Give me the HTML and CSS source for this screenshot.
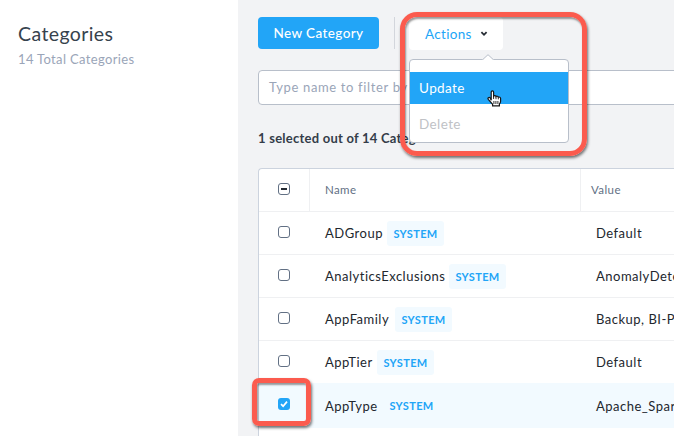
FILE: index.html
```
<!DOCTYPE html>
<html lang="en">
<head>
<meta charset="utf-8">
<title>Categories</title>
<link rel="stylesheet" href="styles.css">
</head>
<body>
<div class="app">
  <aside class="sidebar">
    <h1>Categories</h1>
    <p>14 Total Categories</p>
  </aside>
  <main class="content">
    <div class="toolbar">
      <button class="primary">New Category</button>
      <span class="separator"></span>
      <div class="actions">
        <button class="actions-button">Actions
          <svg width="8" height="6" viewBox="0 0 8 6"><path d="M1.4 1.2 4 3.8 6.6 1.2" fill="none" stroke="#252b33" stroke-width="1.8"/></svg>
        </button>
        <div class="menu">
          <svg class="menu-arrow" width="12" height="6" viewBox="0 0 12 6"><path d="M0 6 1 5.5 6 .7 11 5.5 12 6Z" fill="#fff"/><path d="M.8 5.5 6 .7 11.2 5.5" fill="none" stroke="#b8bfca"/></svg>
          <div class="item active">Update</div>
          <div class="item disabled">Delete</div>
        </div>
      </div>
    </div>
    <div class="filter">Type name to filter by</div>
    <div class="summary">1 selected out of 14 Categories</div>
    <div class="table">
      <div class="row header">
        <div class="check"><span class="box mixed"></span></div>
        <div class="name">Name</div>
        <div class="value">Value</div>
      </div>
      <div class="row">
        <div class="check"><span class="box"></span></div>
        <div class="name"><span class="n1">ADGroup</span><span class="tag">SYSTEM</span></div>
        <div class="value">Default</div>
      </div>
      <div class="row">
        <div class="check"><span class="box"></span></div>
        <div class="name"><span class="n2">AnalyticsExclusions</span><span class="tag">SYSTEM</span></div>
        <div class="value">AnomalyDetection</div>
      </div>
      <div class="row">
        <div class="check"><span class="box"></span></div>
        <div class="name"><span class="n3">AppFamily</span><span class="tag">SYSTEM</span></div>
        <div class="value">Backup, BI-Platform</div>
      </div>
      <div class="row last">
        <div class="check"><span class="box"></span></div>
        <div class="name"><span class="n4">AppTier</span><span class="tag">SYSTEM</span></div>
        <div class="value">Default</div>
      </div>
      <div class="row selected">
        <div class="check"><span class="box checked"><svg width="12" height="12" viewBox="0 0 12 12"><path d="M3 6.2 5.1 8.2 9 3.6" fill="none" stroke="#fff" stroke-width="1.7"/></svg></span></div>
        <div class="name"><span class="n5">AppType</span><span class="tag">SYSTEM</span></div>
        <div class="value">Apache_Spark</div>
      </div>
    </div>
  </main>
  <div class="callout callout-menu"></div>
  <div class="callout callout-check"></div>
  <svg class="cursor" width="15" height="17" viewBox="0 0 15 17"><path d="M4.2 10.2V2.3C4.2.5 6.6.5 6.6 2.3V6.2C7.2 5.4 8.8 5.5 9 6.6 9.8 5.9 11.1 6.2 11.3 7.2 12.3 6.7 13.6 7.2 13.6 8.5V11.2C13.6 12.8 12.7 13.4 12.4 14.2V15.8H5.6V14.3L1.3 9.4C.3 8 2 6.7 3.2 7.9Z" fill="#fff" stroke="#161616" stroke-width="1.2"/><path d="M6.6 6V9M9 7V9.2M11.3 7.5V9.4M6.9 11V14M8.9 11V14M10.9 11V14" stroke="#161616" stroke-width=".9"/></svg>
</div>
</body>
</html>
```
FILE: styles.css
```
* { box-sizing: border-box; }
body {
  margin: 0;
  overflow: hidden;
  font-family: Lato, "Liberation Sans", sans-serif;
  font-size: 13px;
  letter-spacing: .4px;
  color: #22272e;
}
button { border: 0; font: inherit; letter-spacing: inherit; }
svg { display: block; }
.app { position: relative; display: flex; width: 674px; height: 436px; overflow: hidden; background: #fff; }
.sidebar { flex: 0 0 238px; padding: 21px 18px; }
.sidebar h1 { margin: 0; font-size: 19.5px; font-weight: 400; line-height: 25px; letter-spacing: .4px; color: #36424d; }
.sidebar p { margin: 4px 0 0; font-size: 13px; line-height: 18px; letter-spacing: .35px; color: #9aa5b8; }
.content { flex: 1; min-width: 0; padding: 17px 0 0 20px; background: #f2f3f5; }
.toolbar { display: flex; height: 33px; }
.primary { width: 121px; height: 32px; padding: 0; border-radius: 4px; background: #22a5f7; color: #fff; font-size: 13.5px; font-weight: 500; }
.separator { width: 1px; height: 32px; margin: 0 14px 0 15px; background: #d3d6dc; }
.actions { position: relative; }
.actions-button { display: flex; align-items: center; justify-content: space-between; width: 94px; height: 33px; padding: 1px 15px 0 16px; border-radius: 4px; background: #fff; color: #22a5f7; font-size: 13.5px; letter-spacing: .3px; }
.menu { position: absolute; z-index: 2; top: 42px; left: 0; width: 160px; height: 84px; padding-top: 12px; border: 1px solid #b8bfca; border-radius: 4px; background: #fff; }
.menu-arrow { position: absolute; top: -6px; left: 72px; }
.item { height: 32px; padding: 0 9px; font-size: 13.5px; line-height: 33px; letter-spacing: .4px; }
.active { background: #22a5f7; color: #fff; }
.disabled { margin-top: 4px; color: #c0c2c6; }
.filter { height: 35px; margin: 20px -20px 0 0; padding-left: 10px; border: 1px solid #b8bfca; border-radius: 4px; background: #fff; color: #9aa5b8; line-height: 33px; letter-spacing: .65px; }
.summary { margin-top: 23px; line-height: 20px; font-weight: 700; letter-spacing: .24px; color: #343d49; white-space: nowrap; }
.table { height: 280px; margin-top: 20px; border: 1px solid #ccd3de; border-right: 0; border-radius: 4px 0 0; background: #fff; }
.row { display: grid; grid-template-columns: 51px 271px 1fr; height: 43px; border-bottom: 1px solid #eff0f2; letter-spacing: .5px; }
.check { display: grid; place-items: center; padding: 0 1px 2px 0; }
.box { width: 12px; height: 12px; border: 1px solid #627084; border-radius: 3px; background: #fff; }
.mixed { display: grid; place-items: center; }
.mixed::after { content: ""; width: 6px; height: 2px; background: #252b33; }
.name { display: flex; align-items: center; padding-left: 15px; }
.value { display: flex; align-items: center; padding-left: 15px; white-space: nowrap; overflow: hidden; }
.header { letter-spacing: .4px; }
.header .check { padding-right: 0; border-right: 1px solid #eff0f2; }
.header .name, .header .value { padding-bottom: 1px; font-size: 11.5px; color: #627084; }
.header .name { border-right: 1px solid #eff0f2; }
.header .value { padding-left: 10px; }
.tag { width: 57px; height: 25px; margin-left: 4px; border-radius: 3px; background: #f2faff; color: #22a5f7; font-size: 11px; font-weight: 700; line-height: 26px; letter-spacing: .35px; text-align: center; }
.n1 { width: 58px; }
.n2 { width: 120px; }
.n3 { width: 66px; }
.n4 { width: 48px; }
.n5 { width: 54px; }
.last { height: 42px; border-bottom: 0; }
.selected { height: 45px; background: #f2faff; border-bottom: 0; }
.selected .check { padding-bottom: 3px; }
.checked { border: 0; background: #22a5f7; }
.callout { position: absolute; z-index: 3; border: 5px solid #fb5b4e; box-shadow: 1px 2px 3px rgba(0,0,0,.55), inset 1px 2px 2px rgba(0,0,0,.4); }
.callout-menu { top: 12px; left: 400px; width: 187px; height: 144px; border-radius: 17px; }
.callout-check { top: 378px; left: 252px; width: 59px; height: 48px; border-radius: 7px; }
.cursor { position: absolute; z-index: 4; top: 90px; left: 487px; }
```
